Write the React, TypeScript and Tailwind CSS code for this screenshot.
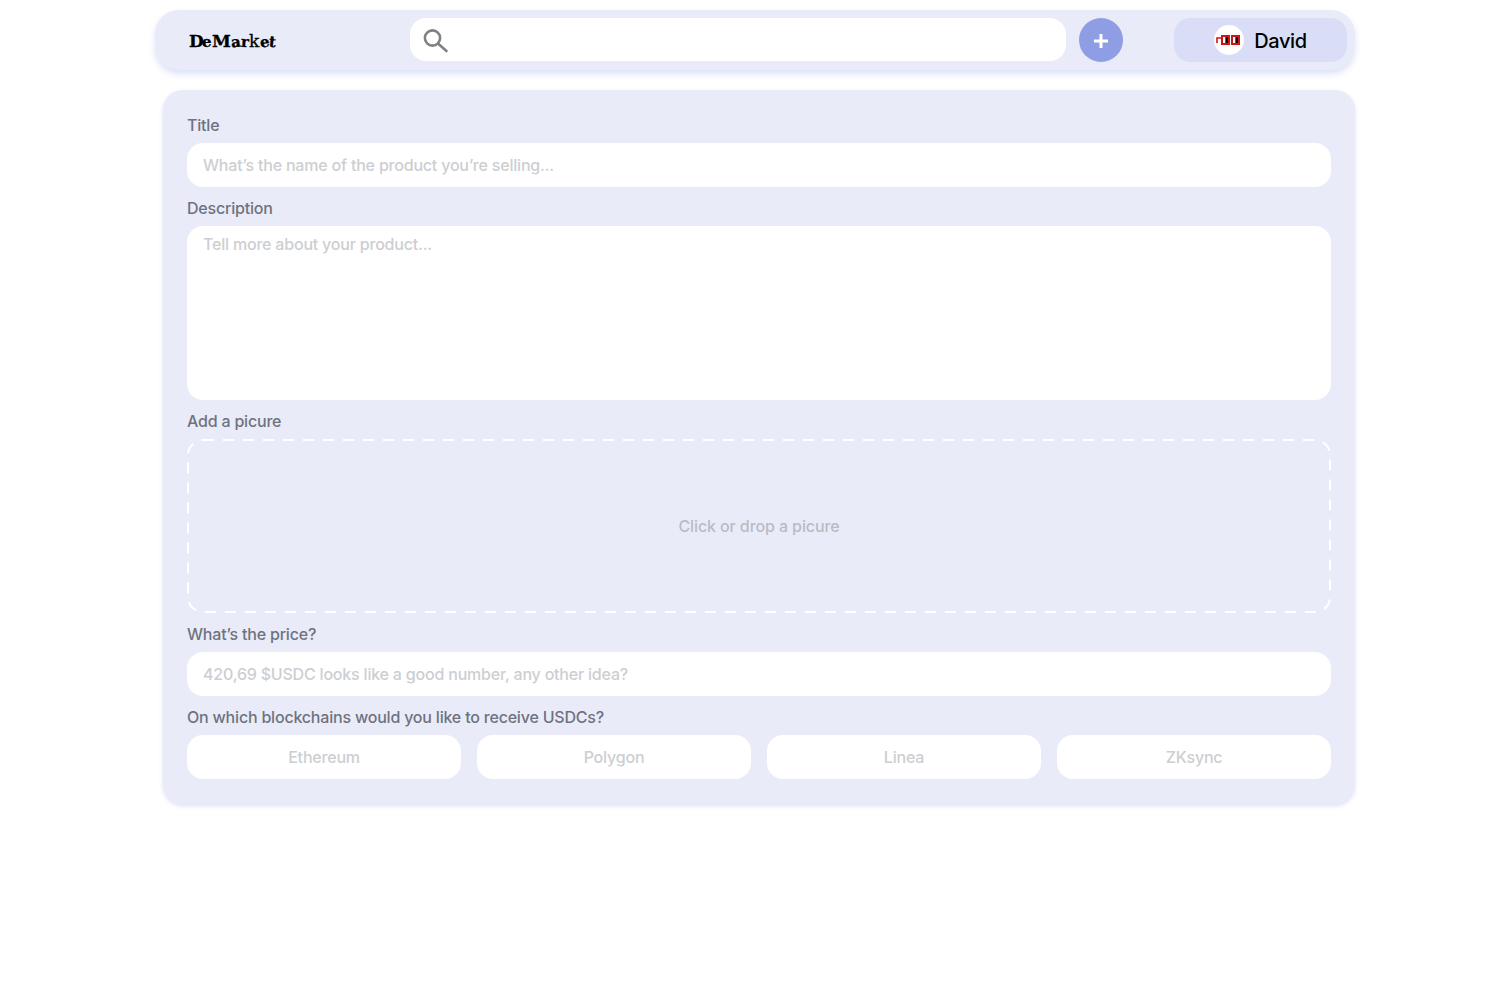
const chains = ['Ethereum', 'Polygon', 'Linea', 'ZKsync'];

function Label({ children }: { children: string }) {
  return (
    <label className="block h-[22px] text-[16px] leading-[22px] font-medium tracking-[-0.2px] text-[#6f7280]">
      {children}
    </label>
  );
}

function Field({ placeholder }: { placeholder: string }) {
  return (
    <div className="mt-[7px] flex h-11 items-center rounded-[16px] bg-white px-4 text-[16px] font-medium tracking-[-0.2px] text-[#cdced2]">
      {placeholder}
    </div>
  );
}

function Logo() {
  return (
    <div className="flex items-baseline pt-[2px] font-['DejaVu_Serif',serif] leading-none font-bold text-black [-webkit-text-stroke:0.3px_black]">
      <span className="w-[13px] text-[17px]">D</span>
      <span className="w-[10px] text-[15px]">e</span>
      <span className="w-[19px] text-[17px]">M</span>
      <span className="w-[10px] -rotate-6 text-[15px]">a</span>
      <span className="w-[8px] rotate-3 text-[15px]">r</span>
      <span className="w-[11px] text-[17px] font-normal">k</span>
      <span className="w-[9px] -rotate-6 text-[15px]">e</span>
      <span className="w-[8px] rotate-6 text-[15px]">t</span>
    </div>
  );
}

function Avatar() {
  return (
    <div className="flex h-[30px] w-[30px] items-center justify-center rounded-full bg-white">
      <svg width="26" height="12" viewBox="0 0 26 12">
        <path d="M1 9V4h4" fill="none" stroke="#d21414" strokeWidth="1.6" />
        <rect x="5" y="1" width="9" height="10" fill="#d21414" />
        <rect x="15" y="1" width="9" height="10" fill="#d21414" />
        <rect x="7" y="3" width="2.5" height="6" fill="#ffffff" />
        <rect x="9.5" y="3" width="2.5" height="6" fill="#111111" />
        <rect x="17" y="3" width="2.5" height="6" fill="#ffffff" />
        <rect x="19.5" y="3" width="2.5" height="6" fill="#111111" />
      </svg>
    </div>
  );
}

function SearchIcon() {
  return (
    <svg width="28" height="28" viewBox="0 0 28 28" fill="none" stroke="#808080" strokeWidth="2.6">
      <circle cx="10.5" cy="12" r="7.6" />
      <path d="M16.5 18L24.5 25" strokeLinecap="round" />
    </svg>
  );
}

function PlusIcon() {
  return (
    <svg width="18" height="18" viewBox="0 0 18 18" fill="none" stroke="#ffffff" strokeWidth="3">
      <path d="M9 2V16M2 9H16" />
    </svg>
  );
}

export default function App() {
  return (
    <div className="min-h-[982px] bg-white pt-[10px] pl-[155px] font-['Inter',sans-serif]">
      <header className="flex h-[60px] w-[1200px] items-center rounded-[24px] bg-[#e9ecf8] pr-2 pl-[34px] shadow-[0_4px_6px_rgba(140,155,235,0.3)]">
        <div className="w-[221px]">
          <Logo />
        </div>
        <div className="mb-px flex h-[43px] w-[656px] items-center rounded-[16px] bg-white pl-3">
          <SearchIcon />
        </div>
        <button className="ml-[13px] flex h-11 w-11 items-center justify-center rounded-full bg-[#8e9de4] pt-[2px]">
          <PlusIcon />
        </button>
        <div className="ml-auto flex h-11 w-[173px] items-center justify-center gap-[10px] rounded-[16px] bg-[#d9ddf6] text-[20px] font-medium tracking-[-0.4px] text-black">
          <Avatar />
          <span className="pt-[2px]">David</span>
        </div>
      </header>

      <form className="mt-5 ml-2 h-[714px] w-[1192px] rounded-[20px] bg-[#e9ecf8] px-6 pt-6 shadow-[0_2px_4px_rgba(140,155,235,0.3)]">
        <Label>Title</Label>
        <Field placeholder="What’s the name of the product you’re selling..." />

        <div className="mt-[10px]">
          <Label>Description</Label>
        </div>
        <div className="mt-[7px] h-[174px] rounded-[16px] bg-white px-4 pt-[7px] text-[16px] leading-[22px] font-medium tracking-[-0.2px] text-[#cdced2]">
          Tell more about your product...
        </div>

        <div className="mt-[10px]">
          <Label>Add a picure</Label>
        </div>
        <div className="relative mt-[7px] flex h-[174px] items-center justify-center text-[16px] font-medium tracking-[-0.1px] text-[#b9bbc5]">
          <svg className="absolute inset-0" width="1144" height="174" fill="none">
            <rect x="1" y="1" width="1142" height="172" rx="15" stroke="#ffffff" strokeWidth="2" strokeDasharray="11 9" />
          </svg>
          Click or drop a picure
        </div>

        <div className="mt-[10px]">
          <Label>What’s the price?</Label>
        </div>
        <Field placeholder="420,69 $USDC looks like a good number, any other idea?" />

        <div className="mt-[10px]">
          <Label>On which blockchains would you like to receive USDCs?</Label>
        </div>
        <div className="mt-[7px] grid grid-cols-4 gap-4">
          {chains.map((chain) => (
            <button
              key={chain}
              type="button"
              className="h-11 rounded-[16px] bg-white text-[16px] font-medium tracking-[-0.2px] text-[#cdced2]"
            >
              {chain}
            </button>
          ))}
        </div>
      </form>
    </div>
  );
}
